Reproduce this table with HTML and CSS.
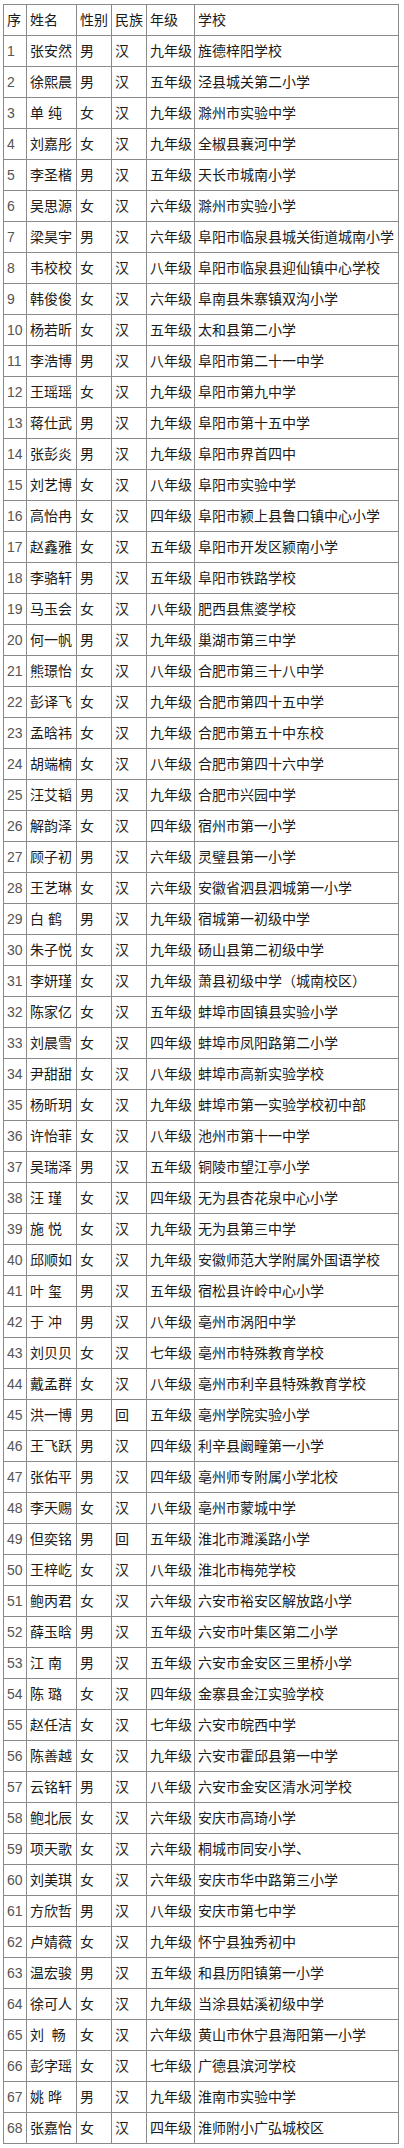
FILE: index.html
```html
<!DOCTYPE html>
<html lang="zh-CN">
<head>
<meta charset="utf-8">
<title>名单</title>
<link rel="stylesheet" href="styles.css">
</head>
<body>
<table class="roster">
<colgroup>
<col class="c-no"><col class="c-name"><col class="c-sex"><col class="c-eth"><col class="c-grade"><col class="c-school">
</colgroup>
<tbody>
<tr><td>序</td><td>姓名</td><td>性别</td><td>民族</td><td>年级</td><td>学校</td></tr>
<tr><td class="num">1</td><td>张安然</td><td>男</td><td>汉</td><td>九年级</td><td>旌德梓阳学校</td></tr>
<tr><td class="num">2</td><td>徐熙晨</td><td>男</td><td>汉</td><td>五年级</td><td>泾县城关第二小学</td></tr>
<tr><td class="num">3</td><td>单 纯</td><td>女</td><td>汉</td><td>九年级</td><td>滁州市实验中学</td></tr>
<tr><td class="num">4</td><td>刘嘉彤</td><td>女</td><td>汉</td><td>九年级</td><td>全椒县襄河中学</td></tr>
<tr><td class="num">5</td><td>李圣楷</td><td>男</td><td>汉</td><td>五年级</td><td>天长市城南小学</td></tr>
<tr><td class="num">6</td><td>吴思源</td><td>女</td><td>汉</td><td>六年级</td><td>滁州市实验小学</td></tr>
<tr><td class="num">7</td><td>梁昊宇</td><td>男</td><td>汉</td><td>六年级</td><td>阜阳市临泉县城关街道城南小学</td></tr>
<tr><td class="num">8</td><td>韦校校</td><td>女</td><td>汉</td><td>八年级</td><td>阜阳市临泉县迎仙镇中心学校</td></tr>
<tr><td class="num">9</td><td>韩俊俊</td><td>女</td><td>汉</td><td>六年级</td><td>阜南县朱寨镇双沟小学</td></tr>
<tr><td class="num">10</td><td>杨若昕</td><td>女</td><td>汉</td><td>五年级</td><td>太和县第二小学</td></tr>
<tr><td class="num">11</td><td>李浩博</td><td>男</td><td>汉</td><td>八年级</td><td>阜阳市第二十一中学</td></tr>
<tr><td class="num">12</td><td>王瑶瑶</td><td>女</td><td>汉</td><td>九年级</td><td>阜阳市第九中学</td></tr>
<tr><td class="num">13</td><td>蒋仕武</td><td>男</td><td>汉</td><td>九年级</td><td>阜阳市第十五中学</td></tr>
<tr><td class="num">14</td><td>张彭炎</td><td>男</td><td>汉</td><td>九年级</td><td>阜阳市界首四中</td></tr>
<tr><td class="num">15</td><td>刘艺博</td><td>女</td><td>汉</td><td>八年级</td><td>阜阳市实验中学</td></tr>
<tr><td class="num">16</td><td>高怡冉</td><td>女</td><td>汉</td><td>四年级</td><td>阜阳市颍上县鲁口镇中心小学</td></tr>
<tr><td class="num">17</td><td>赵鑫雅</td><td>女</td><td>汉</td><td>五年级</td><td>阜阳市开发区颍南小学</td></tr>
<tr><td class="num">18</td><td>李骆轩</td><td>男</td><td>汉</td><td>五年级</td><td>阜阳市铁路学校</td></tr>
<tr><td class="num">19</td><td>马玉会</td><td>女</td><td>汉</td><td>八年级</td><td>肥西县焦婆学校</td></tr>
<tr><td class="num">20</td><td>何一帆</td><td>男</td><td>汉</td><td>九年级</td><td>巢湖市第三中学</td></tr>
<tr><td class="num">21</td><td>熊璟怡</td><td>女</td><td>汉</td><td>八年级</td><td>合肥市第三十八中学</td></tr>
<tr><td class="num">22</td><td>彭译飞</td><td>女</td><td>汉</td><td>九年级</td><td>合肥市第四十五中学</td></tr>
<tr><td class="num">23</td><td>孟晗祎</td><td>女</td><td>汉</td><td>九年级</td><td>合肥市第五十中东校</td></tr>
<tr><td class="num">24</td><td>胡端楠</td><td>女</td><td>汉</td><td>八年级</td><td>合肥市第四十六中学</td></tr>
<tr><td class="num">25</td><td>汪艾韬</td><td>男</td><td>汉</td><td>九年级</td><td>合肥市兴园中学</td></tr>
<tr><td class="num">26</td><td>解韵泽</td><td>女</td><td>汉</td><td>四年级</td><td>宿州市第一小学</td></tr>
<tr><td class="num">27</td><td>顾子初</td><td>男</td><td>汉</td><td>六年级</td><td>灵璧县第一小学</td></tr>
<tr><td class="num">28</td><td>王艺琳</td><td>女</td><td>汉</td><td>六年级</td><td>安徽省泗县泗城第一小学</td></tr>
<tr><td class="num">29</td><td>白 鹤</td><td>男</td><td>汉</td><td>九年级</td><td>宿城第一初级中学</td></tr>
<tr><td class="num">30</td><td>朱子悦</td><td>女</td><td>汉</td><td>九年级</td><td>砀山县第二初级中学</td></tr>
<tr><td class="num">31</td><td>李妍瑾</td><td>女</td><td>汉</td><td>九年级</td><td>萧县初级中学（城南校区）</td></tr>
<tr><td class="num">32</td><td>陈家亿</td><td>女</td><td>汉</td><td>五年级</td><td>蚌埠市固镇县实验小学</td></tr>
<tr><td class="num">33</td><td>刘晨雪</td><td>女</td><td>汉</td><td>四年级</td><td>蚌埠市凤阳路第二小学</td></tr>
<tr><td class="num">34</td><td>尹甜甜</td><td>女</td><td>汉</td><td>八年级</td><td>蚌埠市高新实验学校</td></tr>
<tr><td class="num">35</td><td>杨昕玥</td><td>女</td><td>汉</td><td>九年级</td><td>蚌埠市第一实验学校初中部</td></tr>
<tr><td class="num">36</td><td>许怡菲</td><td>女</td><td>汉</td><td>八年级</td><td>池州市第十一中学</td></tr>
<tr><td class="num">37</td><td>吴瑞泽</td><td>男</td><td>汉</td><td>五年级</td><td>铜陵市望江亭小学</td></tr>
<tr><td class="num">38</td><td>汪 瑾</td><td>女</td><td>汉</td><td>四年级</td><td>无为县杏花泉中心小学</td></tr>
<tr><td class="num">39</td><td>施 悦</td><td>女</td><td>汉</td><td>九年级</td><td>无为县第三中学</td></tr>
<tr><td class="num">40</td><td>邱顺如</td><td>女</td><td>汉</td><td>九年级</td><td>安徽师范大学附属外国语学校</td></tr>
<tr><td class="num">41</td><td>叶 玺</td><td>男</td><td>汉</td><td>五年级</td><td>宿松县许岭中心小学</td></tr>
<tr><td class="num">42</td><td>于 冲</td><td>男</td><td>汉</td><td>八年级</td><td>亳州市涡阳中学</td></tr>
<tr><td class="num">43</td><td>刘贝贝</td><td>女</td><td>汉</td><td>七年级</td><td>亳州市特殊教育学校</td></tr>
<tr><td class="num">44</td><td>戴孟群</td><td>女</td><td>汉</td><td>八年级</td><td>亳州市利辛县特殊教育学校</td></tr>
<tr><td class="num">45</td><td>洪一博</td><td>男</td><td>回</td><td>五年级</td><td>亳州学院实验小学</td></tr>
<tr><td class="num">46</td><td>王飞跃</td><td>男</td><td>汉</td><td>四年级</td><td>利辛县阚疃第一小学</td></tr>
<tr><td class="num">47</td><td>张佑平</td><td>男</td><td>汉</td><td>四年级</td><td>亳州师专附属小学北校</td></tr>
<tr><td class="num">48</td><td>李天赐</td><td>女</td><td>汉</td><td>八年级</td><td>亳州市蒙城中学</td></tr>
<tr><td class="num">49</td><td>但奕铭</td><td>男</td><td>回</td><td>五年级</td><td>淮北市濉溪路小学</td></tr>
<tr><td class="num">50</td><td>王梓屹</td><td>女</td><td>汉</td><td>八年级</td><td>淮北市梅苑学校</td></tr>
<tr><td class="num">51</td><td>鲍丙君</td><td>女</td><td>汉</td><td>六年级</td><td>六安市裕安区解放路小学</td></tr>
<tr><td class="num">52</td><td>薛玉晗</td><td>男</td><td>汉</td><td>五年级</td><td>六安市叶集区第二小学</td></tr>
<tr><td class="num">53</td><td>江 南</td><td>男</td><td>汉</td><td>五年级</td><td>六安市金安区三里桥小学</td></tr>
<tr><td class="num">54</td><td>陈 璐</td><td>女</td><td>汉</td><td>四年级</td><td>金寨县金江实验学校</td></tr>
<tr><td class="num">55</td><td>赵任洁</td><td>女</td><td>汉</td><td>七年级</td><td>六安市皖西中学</td></tr>
<tr><td class="num">56</td><td>陈善越</td><td>女</td><td>汉</td><td>九年级</td><td>六安市霍邱县第一中学</td></tr>
<tr><td class="num">57</td><td>云铭轩</td><td>男</td><td>汉</td><td>八年级</td><td>六安市金安区清水河学校</td></tr>
<tr><td class="num">58</td><td>鲍北辰</td><td>女</td><td>汉</td><td>六年级</td><td>安庆市高琦小学</td></tr>
<tr><td class="num">59</td><td>项天歌</td><td>女</td><td>汉</td><td>六年级</td><td>桐城市同安小学、</td></tr>
<tr><td class="num">60</td><td>刘美琪</td><td>女</td><td>汉</td><td>六年级</td><td>安庆市华中路第三小学</td></tr>
<tr><td class="num">61</td><td>方欣哲</td><td>男</td><td>汉</td><td>八年级</td><td>安庆市第七中学</td></tr>
<tr><td class="num">62</td><td>卢婧薇</td><td>女</td><td>汉</td><td>九年级</td><td>怀宁县独秀初中</td></tr>
<tr><td class="num">63</td><td>温宏骏</td><td>男</td><td>汉</td><td>五年级</td><td>和县历阳镇第一小学</td></tr>
<tr><td class="num">64</td><td>徐可人</td><td>女</td><td>汉</td><td>九年级</td><td>当涂县姑溪初级中学</td></tr>
<tr><td class="num">65</td><td>刘&nbsp; 畅</td><td>女</td><td>汉</td><td>六年级</td><td>黄山市休宁县海阳第一小学</td></tr>
<tr><td class="num">66</td><td>彭字瑶</td><td>女</td><td>汉</td><td>七年级</td><td>广德县滨河学校</td></tr>
<tr><td class="num">67</td><td>姚 晔</td><td>男</td><td>汉</td><td>九年级</td><td>淮南市实验中学</td></tr>
<tr><td class="num">68</td><td>张嘉怡</td><td>女</td><td>汉</td><td>四年级</td><td>淮师附小广弘城校区</td></tr>
</tbody>
</table>
</body>
</html>
```
FILE: styles.css
```css
html, body {
  margin: 0;
  padding: 0;
  background: #ffffff;
}

.roster {
  border-collapse: collapse;
  table-layout: fixed;
  width: 395px;
  margin: 4px 0 0 3px;
  font-family: "Liberation Sans", "Noto Sans CJK SC", sans-serif;
  font-size: 14px;
  color: #1a1a1a;
}

.c-no { width: 23px; }
.c-name { width: 50px; }
.c-sex { width: 35px; }
.c-eth { width: 35px; }
.c-grade { width: 48px; }
.c-school { width: 204px; }

.roster td {
  border: 1px solid #8a8a8a;
  height: 30px;
  padding: 0 0 0 3px;
  line-height: 20px;
  white-space: nowrap;
  overflow: hidden;
  vertical-align: middle;
  text-align: left;
}

.roster td.num {
  color: #555555;
  padding-left: 3px;
}
```
